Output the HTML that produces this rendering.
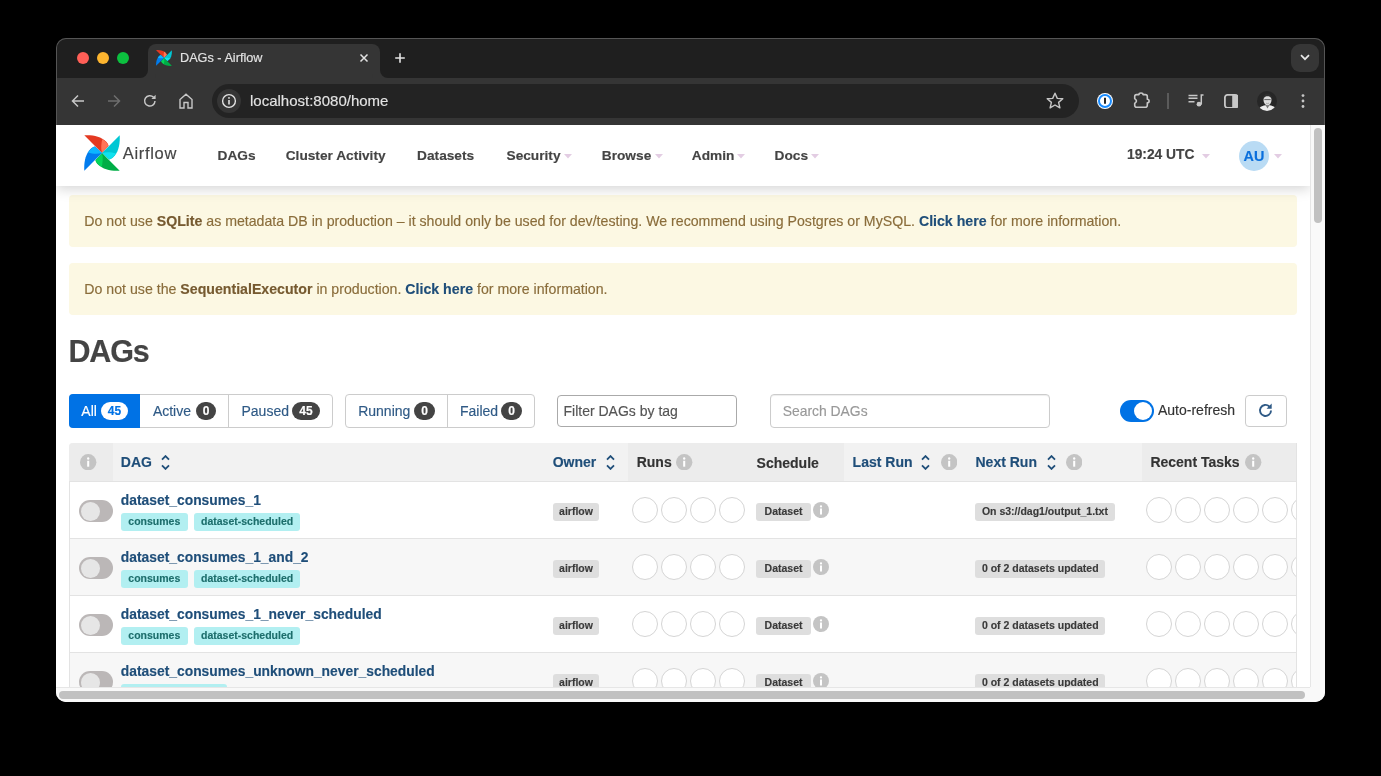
<!DOCTYPE html>
<html><head><meta charset="utf-8">
<style>
*{box-sizing:border-box;margin:0;padding:0}
html,body{width:1381px;height:776px;overflow:hidden;background:#000;font-family:"Liberation Sans",sans-serif}
#win{will-change:transform}
.abs{position:absolute}
#win{position:absolute;left:56px;top:38px;width:1269px;height:664px;border-radius:10px;overflow:hidden;background:#1f1f1f}
#winborder{position:absolute;left:56px;top:38px;width:1269px;height:87px;border-radius:10px 10px 0 0;border:1px solid #555;border-bottom:none;pointer-events:none;z-index:50}
.tl{position:absolute;top:14px;width:12px;height:12px;border-radius:50%}
#tab{position:absolute;left:92px;top:6px;width:232px;height:34px;background:#353535;border-radius:8px 8px 0 0}
#tab:before,#tab:after{content:"";position:absolute;bottom:0;width:8px;height:8px;background:transparent}
#tab:before{left:-8px;border-bottom-right-radius:8px;box-shadow:4px 4px 0 4px #353535}
#tab:after{right:-8px;border-bottom-left-radius:8px;box-shadow:-4px 4px 0 4px #353535}
#toolbar{position:absolute;left:0;top:40px;width:1269px;height:47px;background:#353535}
#omni{position:absolute;left:156px;top:6px;width:867px;height:34px;border-radius:17px;background:#232323}
#content{position:absolute;left:0;top:87px;width:1269px;height:577px;background:#fff;overflow:hidden}
#vp{position:absolute;left:0;top:0;width:1254px;height:562px;overflow:hidden;background:#fff}
#vscroll{position:absolute;left:1254px;top:0;width:15px;height:562px;background:#f9f9f9;border-left:1px solid #e6e6e6}
#hscroll{position:absolute;left:0;top:562px;width:1254px;height:15px;background:#f9f9f9;border-top:1px solid #e6e6e6}
#corner{position:absolute;left:1254px;top:562px;width:15px;height:15px;background:#f9f9f9}
.thumb{position:absolute;background:#c1c1c1;border-radius:4px}
svg{display:block}
.t{position:absolute;white-space:nowrap;line-height:1;-webkit-text-stroke:0.15px currentColor}
</style></head><body>

<div id="win">
  <!-- tab strip -->
  <div class="tl" style="left:21px;background:#ff5f57"></div>
  <div class="tl" style="left:41px;background:#fdb52f"></div>
  <div class="tl" style="left:61px;background:#0cc03f"></div>
  
  <div id="tab">
    <svg class="abs" style="left:8px;top:6px" width="16" height="16" viewBox="0 0 36 36"><path d="M0.3,0.3 C9,-0.2 17,1.5 22,6.5 C23.5,8 24.5,9.5 24.5,11 L18,18 Z" fill="#e43921"/><path d="M18,18 C16.5,13 17.5,8 18.2,4.2 C20,5 22,6.5 24.5,10.5 Z" fill="#ff7557"/><g transform="rotate(90 18 18)"><path d="M0.3,0.3 C9,-0.2 17,1.5 22,6.5 C23.5,8 24.5,9.5 24.5,11 L18,18 Z" fill="#00c7d4"/><path d="M18,18 C16.5,13 17.5,8 18.2,4.2 C20,5 22,6.5 24.5,10.5 Z" fill="#11e1ee"/></g>
<g transform="rotate(180 18 18)"><path d="M0.3,0.3 C9,-0.2 17,1.5 22,6.5 C23.5,8 24.5,9.5 24.5,11 L18,18 Z" fill="#00ad46"/><path d="M18,18 C16.5,13 17.5,8 18.2,4.2 C20,5 22,6.5 24.5,10.5 Z" fill="#04d659"/></g>
<g transform="rotate(270 18 18)"><path d="M0.3,0.3 C9,-0.2 17,1.5 22,6.5 C23.5,8 24.5,9.5 24.5,11 L18,18 Z" fill="#017cee"/><path d="M18,18 C16.5,13 17.5,8 18.2,4.2 C20,5 22,6.5 24.5,10.5 Z" fill="#0cb6ff"/></g>
</svg>
    <div class="t" style="left:32px;top:7.8px;font-size:12.7px;color:#e3e3e3">DAGs - Airflow</div>
    <svg class="abs" style="left:211px;top:9px" width="10" height="10" viewBox="0 0 10 10"><path d="M1.5,1.5 L8.5,8.5 M8.5,1.5 L1.5,8.5" stroke="#e3e3e3" stroke-width="1.5"/></svg>
  </div>
  <svg class="abs" style="left:339px;top:15px" width="10" height="10" viewBox="0 0 10 10"><path d="M5,0.2 V9.8 M0.2,5 H9.8" stroke="#e3e3e3" stroke-width="1.6"/></svg>
  <div class="abs" style="left:1235px;top:6px;width:28px;height:28px;border-radius:9px;background:#363636"></div>
  <svg class="abs" style="left:1244px;top:16px" width="10" height="7" viewBox="0 0 10 7"><path d="M1,1.2 L5,5.2 L9,1.2" stroke="#e8e8e8" stroke-width="1.7" fill="none"/></svg>

  <div id="toolbar">
    <svg class="abs" style="left:15px;top:16px" width="14" height="14" viewBox="0 0 14 14"><path d="M13,7 H1.8 M7,1.5 L1.5,7 L7,12.5" stroke="#c7c7c7" stroke-width="1.5" fill="none"/></svg>
    <svg class="abs" style="left:51px;top:16px" width="14" height="14" viewBox="0 0 14 14"><path d="M1,7 H12.2 M7,1.5 L12.5,7 L7,12.5" stroke="#6e6e6e" stroke-width="1.5" fill="none"/></svg>
    <svg class="abs" style="left:87px;top:16px" width="14" height="14" viewBox="0 0 14 14"><path d="M12,7 A5.2,5.2 0 1 1 10.6,3.3" stroke="#c7c7c7" stroke-width="1.5" fill="none"/><path d="M12.6,0.8 V5 H8.4 Z" fill="#c7c7c7"/></svg>
    <svg class="abs" style="left:123px;top:15px" width="14" height="16" viewBox="0 0 14 16"><path d="M1,15 V6.5 L7,1.2 L13,6.5 V15 H9 V9.5 H5 V15 Z" stroke="#c7c7c7" stroke-width="1.4" fill="none" stroke-linejoin="miter"/></svg>
    <div id="omni">
      <div class="abs" style="left:5px;top:5px;width:24px;height:24px;border-radius:50%;background:#353535"></div>
      <svg class="abs" style="left:9px;top:9px" width="16" height="16" viewBox="0 0 16 16"><circle cx="8" cy="8" r="6.4" stroke="#e3e3e3" stroke-width="1.4" fill="none"/><path d="M8,7 V11.6" stroke="#e3e3e3" stroke-width="1.6"/><circle cx="8" cy="4.9" r="0.9" fill="#e3e3e3"/></svg>
      <div class="t" style="left:38px;top:9.3px;font-size:15px;color:#e3e3e3">localhost:8080/home</div>
      <svg class="abs" style="left:833px;top:7px" width="20" height="20" viewBox="0 0 20 20"><path d="M10,2.2 L12.3,7.4 L17.8,7.8 L13.6,11.4 L14.9,16.9 L10,14 L5.1,16.9 L6.4,11.4 L2.2,7.8 L7.7,7.4 Z" stroke="#c7c7c7" stroke-width="1.4" fill="none" stroke-linejoin="round"/></svg>
    </div>
    <svg class="abs" style="left:1040px;top:14px" width="18" height="18" viewBox="0 0 18 18"><circle cx="9" cy="9" r="8" fill="#fff"/><circle cx="9" cy="9" r="6" fill="none" stroke="#1a8cff" stroke-width="2"/><path d="M9,5.8 V11.8" stroke="#1a1a1a" stroke-width="1.9"/></svg>
    <svg class="abs" style="left:1074px;top:12px" width="24" height="22" viewBox="0 0 24 22"><path d="M6.6,4.6 H9 A2,1.6 0 0 1 13,4.6 H15.3 A2,2 0 0 1 17.3,6.6 V9.2 A1.8,1.8 0 0 1 17.3,12.8 V15.3 A2,2 0 0 1 15.3,17.3 H6.7 A2,2 0 0 1 4.7,15.3 V13.4 Q8.2,11 4.7,8.6 V6.6 A2,2 0 0 1 6.6,4.6 Z" stroke="#c7c7c7" stroke-width="1.6" fill="none" stroke-linejoin="round"/></svg>
    <div class="abs" style="left:1111px;top:15px;width:1.5px;height:16px;background:#5b5b5b"></div>
    <svg class="abs" style="left:1131.5px;top:16px" width="16" height="13" viewBox="0 0 16 13"><path d="M0.5,1.4 H9.5 M0.5,4.3 H9.5 M0.5,7.8 H6.5" stroke="#c7c7c7" stroke-width="1.5"/><path d="M13.3,10.5 V1 H15.5" stroke="#c7c7c7" stroke-width="1.5" fill="none"/><circle cx="11" cy="10.2" r="2.4" fill="#c7c7c7"/></svg>
    <svg class="abs" style="left:1167.8px;top:15.6px" width="14.5" height="14.7" viewBox="0 0 14.5 14.7"><rect x="0.9" y="0.9" width="12.7" height="12.9" rx="2.6" stroke="#c7c7c7" stroke-width="1.8" fill="none"/><rect x="8.2" y="1" width="5.4" height="12.7" fill="#c7c7c7"/></svg>
    <svg class="abs" style="left:1201px;top:13px" width="20" height="20" viewBox="0 0 20 20"><defs><clipPath id="pc"><circle cx="10" cy="10" r="10"/></clipPath></defs><g clip-path="url(#pc)"><rect width="20" height="20" fill="#262626"/><ellipse cx="10.5" cy="20" rx="9.5" ry="6" fill="#ececec"/><path d="M8.5,14 L10.5,17.5 L12.5,14 Z" fill="#777"/><ellipse cx="10.5" cy="9" rx="4" ry="5.2" fill="#dcdcdc"/><path d="M6.4,7.5 C6.4,3.6 8.5,2.8 10.5,2.8 C12.5,2.8 14.6,3.6 14.6,7.5 C13.6,5.8 12,5.3 10.5,5.3 C9,5.3 7.4,5.8 6.4,7.5 Z" fill="#2e2e2e"/><path d="M7.3,8.6 H13.7" stroke="#444" stroke-width="0.8"/><path d="M9,12.2 Q10.5,13 12,12.2" stroke="#888" stroke-width="0.6" fill="none"/></g></svg>
    <svg class="abs" style="left:1242px;top:15px" width="10" height="16" viewBox="0 0 10 16"><circle cx="5" cy="2.6" r="1.4" fill="#c7c7c7"/><circle cx="5" cy="8" r="1.4" fill="#c7c7c7"/><circle cx="5" cy="13.5" r="1.4" fill="#c7c7c7"/></svg>
  </div>
  <div id="content">
    <div id="vp"><div id="pg" style="position:absolute;left:-56px;top:-125px;width:1381px;height:776px">
<div class="abs" style="left:56px;top:125px;width:1254px;height:61px;background:#fff;box-shadow:0 3px 12px rgba(0,0,0,0.17);z-index:2"></div>
<svg class="abs" style="left:84px;top:135px;z-index:3" width="36" height="36" viewBox="0 0 36 36"><path d="M0.3,0.3 C9,-0.2 17,1.5 22,6.5 C23.5,8 24.5,9.5 24.5,11 L18,18 Z" fill="#e43921"/><path d="M18,18 C16.5,13 17.5,8 18.2,4.2 C20,5 22,6.5 24.5,10.5 Z" fill="#ff7557"/><g transform="rotate(90 18 18)"><path d="M0.3,0.3 C9,-0.2 17,1.5 22,6.5 C23.5,8 24.5,9.5 24.5,11 L18,18 Z" fill="#00c7d4"/><path d="M18,18 C16.5,13 17.5,8 18.2,4.2 C20,5 22,6.5 24.5,10.5 Z" fill="#11e1ee"/></g>
<g transform="rotate(180 18 18)"><path d="M0.3,0.3 C9,-0.2 17,1.5 22,6.5 C23.5,8 24.5,9.5 24.5,11 L18,18 Z" fill="#00ad46"/><path d="M18,18 C16.5,13 17.5,8 18.2,4.2 C20,5 22,6.5 24.5,10.5 Z" fill="#04d659"/></g>
<g transform="rotate(270 18 18)"><path d="M0.3,0.3 C9,-0.2 17,1.5 22,6.5 C23.5,8 24.5,9.5 24.5,11 L18,18 Z" fill="#017cee"/><path d="M18,18 C16.5,13 17.5,8 18.2,4.2 C20,5 22,6.5 24.5,10.5 Z" fill="#0cb6ff"/></g>
</svg>
<div class="t" style="left:122.80px;top:144.73px;font-size:16.5px;color:#454545;font-weight:normal;z-index:3;letter-spacing:0.68px">Airflow</div>
<div class="t" style="left:217.60px;top:148.50px;font-size:13.7px;color:#444;font-weight:bold;z-index:3;">DAGs</div>
<div class="t" style="left:285.70px;top:148.50px;font-size:13.7px;color:#444;font-weight:bold;z-index:3;">Cluster Activity</div>
<div class="t" style="left:417.10px;top:148.50px;font-size:13.7px;color:#444;font-weight:bold;z-index:3;">Datasets</div>
<div class="t" style="left:506.50px;top:148.50px;font-size:13.7px;color:#444;font-weight:bold;z-index:3;">Security</div>
<svg class="abs" style="left:563.5px;top:154px;z-index:3" width="8" height="5" viewBox="0 0 8 5"><path d="M0,0 H8 L4,4.5 Z" fill="#e3cde3"/></svg>
<div class="t" style="left:601.80px;top:148.50px;font-size:13.7px;color:#444;font-weight:bold;z-index:3;">Browse</div>
<svg class="abs" style="left:654.7px;top:154px;z-index:3" width="8" height="5" viewBox="0 0 8 5"><path d="M0,0 H8 L4,4.5 Z" fill="#e3cde3"/></svg>
<div class="t" style="left:691.80px;top:148.50px;font-size:13.7px;color:#444;font-weight:bold;z-index:3;">Admin</div>
<svg class="abs" style="left:737px;top:154px;z-index:3" width="8" height="5" viewBox="0 0 8 5"><path d="M0,0 H8 L4,4.5 Z" fill="#e3cde3"/></svg>
<div class="t" style="left:774.60px;top:148.50px;font-size:13.7px;color:#444;font-weight:bold;z-index:3;">Docs</div>
<svg class="abs" style="left:811px;top:154px;z-index:3" width="8" height="5" viewBox="0 0 8 5"><path d="M0,0 H8 L4,4.5 Z" fill="#e3cde3"/></svg>
<div class="t" style="left:1127.00px;top:148.42px;font-size:13.8px;color:#444;font-weight:bold;z-index:3;">19:24 UTC</div>
<svg class="abs" style="left:1201.5px;top:154px;z-index:3" width="8" height="5" viewBox="0 0 8 5"><path d="M0,0 H8 L4,4.5 Z" fill="#e3cde3"/></svg>
<div class="abs" style="left:1239px;top:141px;width:30px;height:30px;border-radius:50%;background:#b9dbf4;z-index:3"></div>
<div class="t" style="left:1242.00px;top:148.61px;font-size:14.4px;color:#0a6fdc;font-weight:bold;z-index:3;width:24px;text-align:center">AU</div>
<svg class="abs" style="left:1274px;top:154px;z-index:3" width="8" height="5" viewBox="0 0 8 5"><path d="M0,0 H8 L4,4.5 Z" fill="#e3cde3"/></svg>
<div class="abs" style="left:69px;top:195px;width:1228px;height:52px;background:#fcf8e3;border-radius:4px"></div>
<div class="abs" style="left:69px;top:263px;width:1228px;height:52px;background:#fcf8e3;border-radius:4px"></div>
<div class="t" style="left:84.30px;top:214.21px;font-size:14.16px;color:#8a6d3b;font-weight:normal;">Do not use <span style="font-weight:bold;color:#765a30">SQLite</span> as metadata DB in production – it should only be used for dev/testing. We recommend using Postgres or MySQL. <span style="font-weight:bold;color:#1f4e79">Click here</span> for more information.</div>
<div class="t" style="left:84.30px;top:282.21px;font-size:14.16px;color:#8a6d3b;font-weight:normal;">Do not use the <span style="font-weight:bold;color:#765a30">SequentialExecutor</span> in production. <span style="font-weight:bold;color:#1f4e79">Click here</span> for more information.</div>
<div class="t" style="left:68.50px;top:335.68px;font-size:30.5px;color:#444;font-weight:bold;letter-spacing:-1.2px">DAGs</div>
<div class="abs" style="left:69px;top:394px;width:264px;height:34px;border:1px solid #ccc;border-radius:4px;background:#fff"></div>
<div class="abs" style="left:69px;top:394px;width:71px;height:34px;background:#0072e5;border-radius:4px 0 0 4px"></div>
<div class="abs" style="left:227.5px;top:394px;width:1.0px;height:34px;background:#ccc"></div>
<div class="t" style="left:81.30px;top:404.15px;font-size:14px;color:#fff;font-weight:normal;">All</div>
<div class="abs" style="left:101px;top:402px;width:27px;height:18px;background:#fff;border-radius:9px"></div>
<div class="t" style="left:101.00px;top:405.14px;font-size:12px;color:#0072e5;font-weight:bold;width:27px;text-align:center">45</div>
<div class="t" style="left:152.90px;top:404.15px;font-size:14px;color:#2f5a86;font-weight:normal;">Active</div>
<div class="abs" style="left:196px;top:402px;width:20px;height:18px;background:#444;border-radius:9px"></div>
<div class="t" style="left:196.00px;top:405.14px;font-size:12px;color:#fff;font-weight:bold;width:20px;text-align:center">0</div>
<div class="t" style="left:241.50px;top:404.15px;font-size:14px;color:#2f5a86;font-weight:normal;">Paused</div>
<div class="abs" style="left:292px;top:402px;width:28px;height:18px;background:#444;border-radius:9px"></div>
<div class="t" style="left:292.00px;top:405.14px;font-size:12px;color:#fff;font-weight:bold;width:28px;text-align:center">45</div>
<div class="abs" style="left:345px;top:394px;width:190px;height:34px;border:1px solid #ccc;border-radius:4px;background:#fff"></div>
<div class="abs" style="left:447px;top:394px;width:1px;height:34px;background:#ccc"></div>
<div class="t" style="left:358.20px;top:404.15px;font-size:14px;color:#2f5a86;font-weight:normal;">Running</div>
<div class="abs" style="left:414px;top:402px;width:21px;height:18px;background:#444;border-radius:9px"></div>
<div class="t" style="left:414.00px;top:405.14px;font-size:12px;color:#fff;font-weight:bold;width:21px;text-align:center">0</div>
<div class="t" style="left:460.00px;top:404.15px;font-size:14px;color:#2f5a86;font-weight:normal;">Failed</div>
<div class="abs" style="left:501px;top:402px;width:21px;height:18px;background:#444;border-radius:9px"></div>
<div class="t" style="left:501.00px;top:405.14px;font-size:12px;color:#fff;font-weight:bold;width:21px;text-align:center">0</div>
<div class="abs" style="left:557px;top:395px;width:180px;height:32px;border:1px solid #aaa;border-radius:4px;background:#fff"></div>
<div class="t" style="left:563.50px;top:404.15px;font-size:14px;color:#555;font-weight:normal;">Filter DAGs by tag</div>
<div class="abs" style="left:770px;top:394px;width:280px;height:34px;border:1px solid #ccc;border-radius:4px;background:#fff;box-shadow:inset 0 1px 1px rgba(0,0,0,.075)"></div>
<div class="t" style="left:782.70px;top:405.13px;font-size:13.9px;color:#999;font-weight:normal;">Search DAGs</div>
<div class="abs" style="left:1120px;top:400px;width:34px;height:22px;background:#0072e5;border-radius:11px"></div>
<div class="abs" style="left:1134px;top:402px;width:18px;height:18px;background:#fff;border-radius:50%"></div>
<div class="t" style="left:1158.00px;top:403.15px;font-size:14px;color:#333;font-weight:normal;">Auto-refresh</div>
<div class="abs" style="left:1245px;top:395px;width:42px;height:32px;border:1px solid #ccc;border-radius:4px;background:#fff"></div>
<svg class="abs" style="left:1257px;top:402px" width="17" height="17" viewBox="0 0 16 16"><path d="M13.2,8 A5.2,5.2 0 1 1 11.6,4.2" stroke="#2f5a86" stroke-width="1.8" fill="none"/><path d="M13.8,1.5 V6.3 H9 Z" fill="#2f5a86"/></svg>
<div class="abs" style="left:69px;top:443px;width:1228px;height:39px;background:#f2f2f2;border-radius:4px 4px 0 0;border-bottom:1px solid #e6e6e6"></div>
<div class="abs" style="left:69px;top:443px;width:44px;height:38px;background:#ececec;border-radius:4px 0 0 0"></div>
<div class="abs" style="left:628px;top:443px;width:216px;height:38px;background:#ececec"></div>
<div class="abs" style="left:1142px;top:443px;width:154px;height:38px;background:#ececec"></div>
<svg class="abs" style="left:80.20px;top:453.60px" width="16.4" height="16.4" viewBox="0 0 16 16"><circle cx="8" cy="8" r="8" fill="#c4c4c4"/><circle cx="8" cy="4.4" r="1.15" fill="#fff"/><path d="M8,6.6 V12.4" stroke="#fff" stroke-width="2"/></svg>
<div class="t" style="left:120.80px;top:455.15px;font-size:14px;color:#1f4e79;font-weight:bold;">DAG</div>
<svg class="abs" style="left:160.5px;top:454.5px" width="9" height="15" viewBox="0 0 9 15"><path d="M1,4.6 L4.5,1.1 L8,4.6 M1,10.4 L4.5,13.9 L8,10.4" stroke="#1f4e79" stroke-width="1.8" fill="none"/></svg>
<div class="t" style="left:552.70px;top:455.15px;font-size:14px;color:#1f4e79;font-weight:bold;">Owner</div>
<svg class="abs" style="left:606.2px;top:454.5px" width="9" height="15" viewBox="0 0 9 15"><path d="M1,4.6 L4.5,1.1 L8,4.6 M1,10.4 L4.5,13.9 L8,10.4" stroke="#1f4e79" stroke-width="1.8" fill="none"/></svg>
<div class="t" style="left:636.70px;top:455.15px;font-size:14px;color:#333;font-weight:bold;">Runs</div>
<svg class="abs" style="left:676.40px;top:453.60px" width="16.4" height="16.4" viewBox="0 0 16 16"><circle cx="8" cy="8" r="8" fill="#c4c4c4"/><circle cx="8" cy="4.4" r="1.15" fill="#fff"/><path d="M8,6.6 V12.4" stroke="#fff" stroke-width="2"/></svg>
<div class="t" style="left:756.60px;top:456.15px;font-size:14px;color:#333;font-weight:bold;">Schedule</div>
<div class="t" style="left:852.60px;top:455.15px;font-size:14px;color:#1f4e79;font-weight:bold;">Last Run</div>
<svg class="abs" style="left:920.7px;top:454.5px" width="9" height="15" viewBox="0 0 9 15"><path d="M1,4.6 L4.5,1.1 L8,4.6 M1,10.4 L4.5,13.9 L8,10.4" stroke="#1f4e79" stroke-width="1.8" fill="none"/></svg>
<svg class="abs" style="left:940.80px;top:453.60px" width="16.4" height="16.4" viewBox="0 0 16 16"><circle cx="8" cy="8" r="8" fill="#c4c4c4"/><circle cx="8" cy="4.4" r="1.15" fill="#fff"/><path d="M8,6.6 V12.4" stroke="#fff" stroke-width="2"/></svg>
<div class="t" style="left:975.50px;top:455.15px;font-size:14px;color:#1f4e79;font-weight:bold;">Next Run</div>
<svg class="abs" style="left:1046.7px;top:454.5px" width="9" height="15" viewBox="0 0 9 15"><path d="M1,4.6 L4.5,1.1 L8,4.6 M1,10.4 L4.5,13.9 L8,10.4" stroke="#1f4e79" stroke-width="1.8" fill="none"/></svg>
<svg class="abs" style="left:1066.00px;top:453.60px" width="16.4" height="16.4" viewBox="0 0 16 16"><circle cx="8" cy="8" r="8" fill="#c4c4c4"/><circle cx="8" cy="4.4" r="1.15" fill="#fff"/><path d="M8,6.6 V12.4" stroke="#fff" stroke-width="2"/></svg>
<div class="t" style="left:1150.40px;top:455.15px;font-size:14px;color:#333;font-weight:bold;">Recent Tasks</div>
<svg class="abs" style="left:1245.30px;top:453.60px" width="16.4" height="16.4" viewBox="0 0 16 16"><circle cx="8" cy="8" r="8" fill="#c4c4c4"/><circle cx="8" cy="4.4" r="1.15" fill="#fff"/><path d="M8,6.6 V12.4" stroke="#fff" stroke-width="2"/></svg>
<div class="abs" style="left:69px;top:481px;width:1px;height:219px;background:#e3e3e3"></div>
<div class="abs" style="left:1296px;top:443px;width:1px;height:257px;background:#e3e3e3"></div>
<div class="abs" style="left:70px;top:482px;width:1226px;height:56px;background:#fff"></div>
<div class="abs" style="left:70px;top:481px;width:1226px;height:1px;background:#e3e3e3"></div>
<div class="abs" style="left:79px;top:500px;width:34px;height:22px;background:#bbb7b7;border-radius:11px"></div>
<div class="abs" style="left:80.5px;top:501.5px;width:19.0px;height:19.0px;background:#e6e6e6;border-radius:50%"></div>
<div class="t" style="left:120.80px;top:493.68px;font-size:13.85px;color:#1f4e79;font-weight:bold;">dataset_consumes_1</div>
<div class="t" style="left:121px;top:513.2px;width:66.6px;height:17.7px;background:#b2eff1;border-radius:3px;color:#1d6e6c;font-size:10.5px;font-weight:bold;text-align:center;line-height:17.7px">consumes</div>
<div class="t" style="left:194.2px;top:513.2px;width:105.8px;height:17.7px;background:#b2eff1;border-radius:3px;color:#1d6e6c;font-size:10.5px;font-weight:bold;text-align:center;line-height:17.7px">dataset-scheduled</div>
<div class="t" style="left:553px;top:503px;width:46px;height:17.7px;background:#dedede;border-radius:3px;color:#3a3a3a;font-size:10.5px;font-weight:bold;text-align:center;line-height:17.7px">airflow</div>
<div class="abs" style="left:631.7px;top:496.9px;width:26.0px;height:26.0px;border:1px solid #d5d5d5;border-radius:50%;background:#fff"></div>
<div class="abs" style="left:660.8px;top:496.9px;width:26.0px;height:26.0px;border:1px solid #d5d5d5;border-radius:50%;background:#fff"></div>
<div class="abs" style="left:689.9px;top:496.9px;width:26.0px;height:26.0px;border:1px solid #d5d5d5;border-radius:50%;background:#fff"></div>
<div class="abs" style="left:719.0px;top:496.9px;width:26.0px;height:26.0px;border:1px solid #d5d5d5;border-radius:50%;background:#fff"></div>
<div class="t" style="left:756.2px;top:503px;width:54.7px;height:17.7px;background:#dedede;border-radius:3px;color:#3a3a3a;font-size:10.5px;font-weight:bold;text-align:center;line-height:17.7px">Dataset</div>
<svg class="abs" style="left:812.90px;top:502.00px" width="16" height="16" viewBox="0 0 16 16"><circle cx="8" cy="8" r="8" fill="#c4c4c4"/><circle cx="8" cy="4.4" r="1.15" fill="#fff"/><path d="M8,6.6 V12.4" stroke="#fff" stroke-width="2"/></svg>
<div class="t" style="left:975.3px;top:503px;width:139.3px;height:17.7px;background:#dedede;border-radius:3px;color:#3a3a3a;font-size:10.5px;font-weight:bold;text-align:center;line-height:17.7px">On s3://dag1/output_1.txt</div>
<div class="abs" style="left:1142px;top:482px;width:154px;height:57px;overflow:hidden">
<div class="abs" style="left:3.5px;top:15.0px;width:26px;height:26px;border:1px solid #d5d5d5;border-radius:50%;background:#fff"></div>
<div class="abs" style="left:32.5px;top:15.0px;width:26px;height:26px;border:1px solid #d5d5d5;border-radius:50%;background:#fff"></div>
<div class="abs" style="left:61.5px;top:15.0px;width:26px;height:26px;border:1px solid #d5d5d5;border-radius:50%;background:#fff"></div>
<div class="abs" style="left:90.5px;top:15.0px;width:26px;height:26px;border:1px solid #d5d5d5;border-radius:50%;background:#fff"></div>
<div class="abs" style="left:119.5px;top:15.0px;width:26px;height:26px;border:1px solid #d5d5d5;border-radius:50%;background:#fff"></div>
<div class="abs" style="left:148.5px;top:15.0px;width:26px;height:26px;border:1px solid #d5d5d5;border-radius:50%;background:#fff"></div>
</div>
<div class="abs" style="left:70px;top:539px;width:1226px;height:56px;background:#f7f7f7"></div>
<div class="abs" style="left:70px;top:538px;width:1226px;height:1px;background:#e3e3e3"></div>
<div class="abs" style="left:79px;top:557px;width:34px;height:22px;background:#bbb7b7;border-radius:11px"></div>
<div class="abs" style="left:80.5px;top:558.5px;width:19.0px;height:19.0px;background:#e6e6e6;border-radius:50%"></div>
<div class="t" style="left:120.80px;top:550.68px;font-size:13.85px;color:#1f4e79;font-weight:bold;">dataset_consumes_1_and_2</div>
<div class="t" style="left:121px;top:570.2px;width:66.6px;height:17.7px;background:#b2eff1;border-radius:3px;color:#1d6e6c;font-size:10.5px;font-weight:bold;text-align:center;line-height:17.7px">consumes</div>
<div class="t" style="left:194.2px;top:570.2px;width:105.8px;height:17.7px;background:#b2eff1;border-radius:3px;color:#1d6e6c;font-size:10.5px;font-weight:bold;text-align:center;line-height:17.7px">dataset-scheduled</div>
<div class="t" style="left:553px;top:560px;width:46px;height:17.7px;background:#dedede;border-radius:3px;color:#3a3a3a;font-size:10.5px;font-weight:bold;text-align:center;line-height:17.7px">airflow</div>
<div class="abs" style="left:631.7px;top:553.9px;width:26.0px;height:26.0px;border:1px solid #d5d5d5;border-radius:50%;background:#fff"></div>
<div class="abs" style="left:660.8px;top:553.9px;width:26.0px;height:26.0px;border:1px solid #d5d5d5;border-radius:50%;background:#fff"></div>
<div class="abs" style="left:689.9px;top:553.9px;width:26.0px;height:26.0px;border:1px solid #d5d5d5;border-radius:50%;background:#fff"></div>
<div class="abs" style="left:719.0px;top:553.9px;width:26.0px;height:26.0px;border:1px solid #d5d5d5;border-radius:50%;background:#fff"></div>
<div class="t" style="left:756.2px;top:560px;width:54.7px;height:17.7px;background:#dedede;border-radius:3px;color:#3a3a3a;font-size:10.5px;font-weight:bold;text-align:center;line-height:17.7px">Dataset</div>
<svg class="abs" style="left:812.90px;top:559.00px" width="16" height="16" viewBox="0 0 16 16"><circle cx="8" cy="8" r="8" fill="#c4c4c4"/><circle cx="8" cy="4.4" r="1.15" fill="#fff"/><path d="M8,6.6 V12.4" stroke="#fff" stroke-width="2"/></svg>
<div class="t" style="left:975.3px;top:560px;width:129.9px;height:17.7px;background:#dedede;border-radius:3px;color:#3a3a3a;font-size:10.5px;font-weight:bold;text-align:center;line-height:17.7px">0 of 2 datasets updated</div>
<div class="abs" style="left:1142px;top:539px;width:154px;height:57px;overflow:hidden">
<div class="abs" style="left:3.5px;top:15.0px;width:26px;height:26px;border:1px solid #d5d5d5;border-radius:50%;background:#fff"></div>
<div class="abs" style="left:32.5px;top:15.0px;width:26px;height:26px;border:1px solid #d5d5d5;border-radius:50%;background:#fff"></div>
<div class="abs" style="left:61.5px;top:15.0px;width:26px;height:26px;border:1px solid #d5d5d5;border-radius:50%;background:#fff"></div>
<div class="abs" style="left:90.5px;top:15.0px;width:26px;height:26px;border:1px solid #d5d5d5;border-radius:50%;background:#fff"></div>
<div class="abs" style="left:119.5px;top:15.0px;width:26px;height:26px;border:1px solid #d5d5d5;border-radius:50%;background:#fff"></div>
<div class="abs" style="left:148.5px;top:15.0px;width:26px;height:26px;border:1px solid #d5d5d5;border-radius:50%;background:#fff"></div>
</div>
<div class="abs" style="left:70px;top:596px;width:1226px;height:56px;background:#fff"></div>
<div class="abs" style="left:70px;top:595px;width:1226px;height:1px;background:#e3e3e3"></div>
<div class="abs" style="left:79px;top:614px;width:34px;height:22px;background:#bbb7b7;border-radius:11px"></div>
<div class="abs" style="left:80.5px;top:615.5px;width:19.0px;height:19.0px;background:#e6e6e6;border-radius:50%"></div>
<div class="t" style="left:120.80px;top:607.68px;font-size:13.85px;color:#1f4e79;font-weight:bold;">dataset_consumes_1_never_scheduled</div>
<div class="t" style="left:121px;top:627.2px;width:66.6px;height:17.7px;background:#b2eff1;border-radius:3px;color:#1d6e6c;font-size:10.5px;font-weight:bold;text-align:center;line-height:17.7px">consumes</div>
<div class="t" style="left:194.2px;top:627.2px;width:105.8px;height:17.7px;background:#b2eff1;border-radius:3px;color:#1d6e6c;font-size:10.5px;font-weight:bold;text-align:center;line-height:17.7px">dataset-scheduled</div>
<div class="t" style="left:553px;top:617px;width:46px;height:17.7px;background:#dedede;border-radius:3px;color:#3a3a3a;font-size:10.5px;font-weight:bold;text-align:center;line-height:17.7px">airflow</div>
<div class="abs" style="left:631.7px;top:610.9px;width:26.0px;height:26.0px;border:1px solid #d5d5d5;border-radius:50%;background:#fff"></div>
<div class="abs" style="left:660.8px;top:610.9px;width:26.0px;height:26.0px;border:1px solid #d5d5d5;border-radius:50%;background:#fff"></div>
<div class="abs" style="left:689.9px;top:610.9px;width:26.0px;height:26.0px;border:1px solid #d5d5d5;border-radius:50%;background:#fff"></div>
<div class="abs" style="left:719.0px;top:610.9px;width:26.0px;height:26.0px;border:1px solid #d5d5d5;border-radius:50%;background:#fff"></div>
<div class="t" style="left:756.2px;top:617px;width:54.7px;height:17.7px;background:#dedede;border-radius:3px;color:#3a3a3a;font-size:10.5px;font-weight:bold;text-align:center;line-height:17.7px">Dataset</div>
<svg class="abs" style="left:812.90px;top:616.00px" width="16" height="16" viewBox="0 0 16 16"><circle cx="8" cy="8" r="8" fill="#c4c4c4"/><circle cx="8" cy="4.4" r="1.15" fill="#fff"/><path d="M8,6.6 V12.4" stroke="#fff" stroke-width="2"/></svg>
<div class="t" style="left:975.3px;top:617px;width:129.9px;height:17.7px;background:#dedede;border-radius:3px;color:#3a3a3a;font-size:10.5px;font-weight:bold;text-align:center;line-height:17.7px">0 of 2 datasets updated</div>
<div class="abs" style="left:1142px;top:596px;width:154px;height:57px;overflow:hidden">
<div class="abs" style="left:3.5px;top:15.0px;width:26px;height:26px;border:1px solid #d5d5d5;border-radius:50%;background:#fff"></div>
<div class="abs" style="left:32.5px;top:15.0px;width:26px;height:26px;border:1px solid #d5d5d5;border-radius:50%;background:#fff"></div>
<div class="abs" style="left:61.5px;top:15.0px;width:26px;height:26px;border:1px solid #d5d5d5;border-radius:50%;background:#fff"></div>
<div class="abs" style="left:90.5px;top:15.0px;width:26px;height:26px;border:1px solid #d5d5d5;border-radius:50%;background:#fff"></div>
<div class="abs" style="left:119.5px;top:15.0px;width:26px;height:26px;border:1px solid #d5d5d5;border-radius:50%;background:#fff"></div>
<div class="abs" style="left:148.5px;top:15.0px;width:26px;height:26px;border:1px solid #d5d5d5;border-radius:50%;background:#fff"></div>
</div>
<div class="abs" style="left:70px;top:653px;width:1226px;height:56px;background:#f7f7f7"></div>
<div class="abs" style="left:70px;top:652px;width:1226px;height:1px;background:#e3e3e3"></div>
<div class="abs" style="left:79px;top:671px;width:34px;height:22px;background:#bbb7b7;border-radius:11px"></div>
<div class="abs" style="left:80.5px;top:672.5px;width:19.0px;height:19.0px;background:#e6e6e6;border-radius:50%"></div>
<div class="t" style="left:120.80px;top:664.68px;font-size:13.85px;color:#1f4e79;font-weight:bold;">dataset_consumes_unknown_never_scheduled</div>
<div class="t" style="left:121px;top:684.2px;width:106px;height:17.7px;background:#b2eff1;border-radius:3px;color:#1d6e6c;font-size:10.5px;font-weight:bold;text-align:center;line-height:17.7px">dataset-scheduled</div>
<div class="t" style="left:553px;top:674px;width:46px;height:17.7px;background:#dedede;border-radius:3px;color:#3a3a3a;font-size:10.5px;font-weight:bold;text-align:center;line-height:17.7px">airflow</div>
<div class="abs" style="left:631.7px;top:667.9px;width:26.0px;height:26.0px;border:1px solid #d5d5d5;border-radius:50%;background:#fff"></div>
<div class="abs" style="left:660.8px;top:667.9px;width:26.0px;height:26.0px;border:1px solid #d5d5d5;border-radius:50%;background:#fff"></div>
<div class="abs" style="left:689.9px;top:667.9px;width:26.0px;height:26.0px;border:1px solid #d5d5d5;border-radius:50%;background:#fff"></div>
<div class="abs" style="left:719.0px;top:667.9px;width:26.0px;height:26.0px;border:1px solid #d5d5d5;border-radius:50%;background:#fff"></div>
<div class="t" style="left:756.2px;top:674px;width:54.7px;height:17.7px;background:#dedede;border-radius:3px;color:#3a3a3a;font-size:10.5px;font-weight:bold;text-align:center;line-height:17.7px">Dataset</div>
<svg class="abs" style="left:812.90px;top:673.00px" width="16" height="16" viewBox="0 0 16 16"><circle cx="8" cy="8" r="8" fill="#c4c4c4"/><circle cx="8" cy="4.4" r="1.15" fill="#fff"/><path d="M8,6.6 V12.4" stroke="#fff" stroke-width="2"/></svg>
<div class="t" style="left:975.3px;top:674px;width:129.9px;height:17.7px;background:#dedede;border-radius:3px;color:#3a3a3a;font-size:10.5px;font-weight:bold;text-align:center;line-height:17.7px">0 of 2 datasets updated</div>
<div class="abs" style="left:1142px;top:653px;width:154px;height:57px;overflow:hidden">
<div class="abs" style="left:3.5px;top:15.0px;width:26px;height:26px;border:1px solid #d5d5d5;border-radius:50%;background:#fff"></div>
<div class="abs" style="left:32.5px;top:15.0px;width:26px;height:26px;border:1px solid #d5d5d5;border-radius:50%;background:#fff"></div>
<div class="abs" style="left:61.5px;top:15.0px;width:26px;height:26px;border:1px solid #d5d5d5;border-radius:50%;background:#fff"></div>
<div class="abs" style="left:90.5px;top:15.0px;width:26px;height:26px;border:1px solid #d5d5d5;border-radius:50%;background:#fff"></div>
<div class="abs" style="left:119.5px;top:15.0px;width:26px;height:26px;border:1px solid #d5d5d5;border-radius:50%;background:#fff"></div>
<div class="abs" style="left:148.5px;top:15.0px;width:26px;height:26px;border:1px solid #d5d5d5;border-radius:50%;background:#fff"></div>
</div>
</div></div>
    <div id="vscroll"><div class="thumb" style="left:3px;top:3px;width:8px;height:95px"></div></div>
    <div id="hscroll"><div class="thumb" style="left:3px;top:3px;width:1246px;height:8px"></div></div>
    <div id="corner"></div>
  </div>
</div>
<div id="winborder"></div>
</body></html>
